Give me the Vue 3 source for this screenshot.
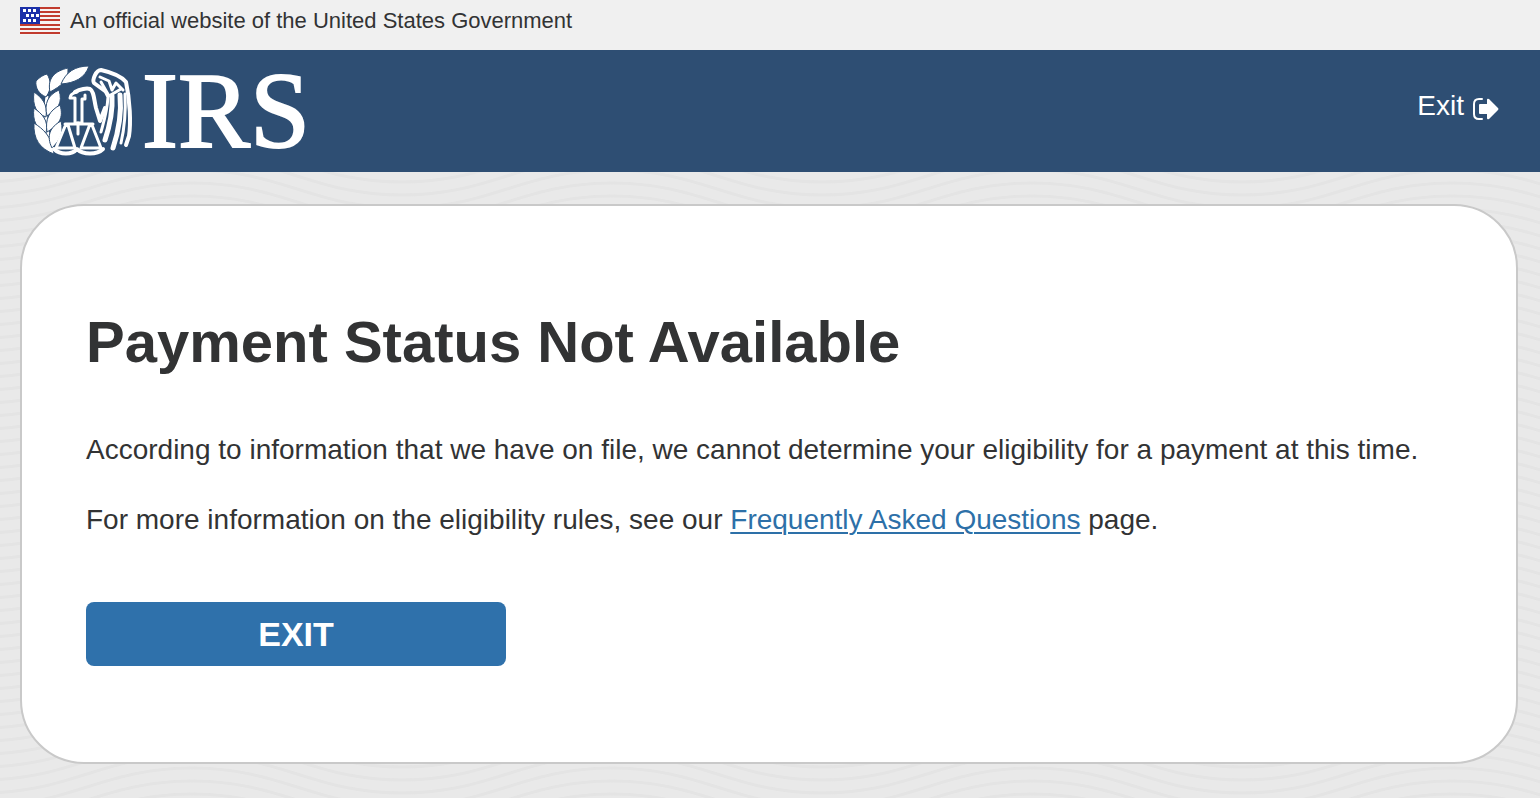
<script setup>
const stripes = [0, 1, 2, 3, 4, 5, 6]
const waves = [0, 13, 26, 39, 52, 65]
const stars = [
  [3, 2], [8, 2], [13, 2],
  [6, 7], [11, 7], [16, 7],
  [3, 12], [8, 12], [13, 12],
]
</script>

<template>
  <div class="page">
    <svg class="waves" aria-hidden="true">
      <defs>
        <pattern id="wave" x="-18" width="420" height="13" patternUnits="userSpaceOnUse">
          <path
            v-for="y in waves"
            :key="y"
            :d="`M0 ${y} C90 ${y} 120 ${y - 38} 210 ${y - 38} S330 ${y} 420 ${y}`"
          />
        </pattern>
      </defs>
      <rect width="100%" height="100%" fill="url(#wave)" />
    </svg>

    <div class="banner">
      <svg class="flag" viewBox="0 0 40 28" aria-hidden="true">
        <rect width="40" height="28" fill="#f6f3f2" />
        <rect v-for="s in stripes" :key="s" x="0" :y="s * 4 + (s > 3 ? 1 : 0)" width="40" height="2" fill="#c13b2e" />
        <rect width="20" height="17" fill="#1b2fa8" />
        <rect v-for="(s, i) in stars" :key="i" :x="s[0]" :y="s[1]" width="3" height="3" fill="#fff" />
      </svg>
      <span>An official website of the United States Government</span>
    </div>

    <header class="bar">
      <a class="logo" href="#" aria-label="IRS">
        <svg class="emblem" viewBox="0 0 100 90" aria-hidden="true">
          <path d="M13 30C11 45 11 66 19 82" fill="none" stroke="#fff" stroke-width="3" />
          <g fill="#fff" stroke="#2e4e73" stroke-width="1">
            <path d="M13 8C17 14 18 23 12 31C5 28 1 22 2 15C6 11 9 9 13 8Z" />
            <path d="M34 2C35 14 27 20 16 26C13 12 21 5 34 2Z" />
            <path d="M55 0C51 12 41 17 27 18C32 6 41 0 55 0Z" />
            <path d="M0 26C8 32 14 38 12 51C3 48 -2 40 0 26Z" />
            <path d="M25 24C29 37 24 43 13 50C10 37 14 29 25 24Z" />
            <path d="M0 42C8 48 15 54 12 67C3 63 -2 55 0 42Z" />
            <path d="M26 39C30 52 25 59 13 66C11 53 15 45 26 39Z" />
            <path d="M0 57C9 63 18 70 20 88C6 83 -1 73 0 57Z" />
            <path d="M27 55C30 67 26 74 18 82C12 70 16 61 27 55Z" />
          </g>
          <g fill="none" stroke="#fff" stroke-linejoin="round" stroke-linecap="round">
            <path stroke-width="4" d="M41 26C46 23 53 22 56 23C60 25 60 34 62 42L66 55L71 42" />
            <path stroke-width="3" d="M43 26C39 27 36 29 36 32H41V57H48V33H51V29" />
            <path stroke-width="4" d="M71 25L60 17C58 14 62 4 67 4C76 6 87 10 92 16C96 34 97 57 95 70L92 79" />
            <path stroke-width="3" d="M66 11L75 15L78 24L82 17L89 24M67 16L75 30L87 23M71 25L74 31C73 47 69 58 67 66" />
            <path stroke-width="5" d="M78 30C79 47 75 62 71 74M86 29C88 50 84 67 79 82" />
            <path stroke-width="3" d="M91 28C92 48 90 64 87 77" />
            <path stroke-width="3" d="M31 58H59M44 57V68M32 58L22 82H41L34 59M56 58L47 82H67L58 59" />
            <path stroke-width="4" d="M20 83C26 89 38 89 43 83C49 89 63 89 69 83" />
          </g>
        </svg>
        <span class="wordmark">IRS</span>
      </a>
      <a class="exit" href="#">
        <span>Exit</span>
        <svg viewBox="0 0 28 24" aria-hidden="true">
          <path d="M10 2H7Q2 2 2 7V17Q2 22 7 22H10" fill="none" stroke="#fff" stroke-width="2" stroke-linecap="round" />
          <path d="M8 7H15V3Q15 1 17 2L26 11Q27 12 26 13L17 22Q15 23 15 21V17H8Q7 17 7 16V8Q7 7 8 7Z" fill="#fff" />
        </svg>
      </a>
    </header>

    <main class="card">
      <h1>Payment Status Not Available</h1>
      <p>According to information that we have on file, we cannot determine your eligibility for a payment at this time.</p>
      <p>For more information on the eligibility rules, see our <a href="#">Frequently Asked Questions</a> page.</p>
      <button type="button">EXIT</button>
    </main>
  </div>
</template>

<style>
body {
  margin: 0;
  background: #e9e9e9;
}
</style>

<style scoped>
.page {
  position: relative;
  min-height: 100vh;
  box-sizing: border-box;
  padding-bottom: 34px;
  font-family: "Liberation Sans", Arial, sans-serif;
  color: #323334;
}
.waves {
  position: absolute;
  inset: 0;
  width: 100%;
  height: 100%;
  z-index: -1;
}
.waves path {
  fill: none;
  stroke: #e4e4e4;
  stroke-width: 3;
}
.banner {
  display: flex;
  align-items: center;
  gap: 10px;
  box-sizing: border-box;
  height: 50px;
  padding: 0 20px 8px;
  background: #f0f0f0;
  font-size: 22px;
}
.flag {
  width: 40px;
  height: 28px;
}
.bar {
  display: flex;
  align-items: center;
  justify-content: space-between;
  height: 122px;
  padding: 0 40px 0 34px;
  background: #2e4e73;
}
.logo {
  display: flex;
  align-items: center;
  gap: 8px;
  color: #fff;
  text-decoration: none;
}
.emblem {
  width: 100px;
  height: 90px;
  overflow: visible;
}
.wordmark {
  font-family: "Liberation Serif", "Times New Roman", serif;
  font-size: 108px;
  line-height: 120px;
  -webkit-text-stroke: 2px #fff;
}
.exit {
  display: flex;
  align-items: center;
  gap: 8px;
  color: #fff;
  font-size: 28px;
  line-height: 32px;
  padding-bottom: 10px;
  text-decoration: none;
}
.exit svg {
  width: 28px;
  height: 24px;
  margin-top: 6px;
}
.card {
  margin: 32px 22px 0 20px;
  padding: 96px 64px;
  border: 2px solid #c9c9c9;
  border-radius: 64px;
  background: #fff;
}
h1 {
  margin: 0 0 48px;
  font-size: 58px;
  line-height: 80px;
}
p {
  margin: 0 0 30px;
  font-size: 28px;
  line-height: 40px;
}
p a {
  color: #2d70a8;
  text-decoration-thickness: 2px;
  text-underline-offset: 3px;
}
button {
  display: block;
  width: 420px;
  max-width: 100%;
  height: 64px;
  margin-top: 62px;
  border: 0;
  border-radius: 8px;
  background: #2f71ab;
  color: #fff;
  font-family: inherit;
  font-size: 34px;
  font-weight: 700;
}
</style>
